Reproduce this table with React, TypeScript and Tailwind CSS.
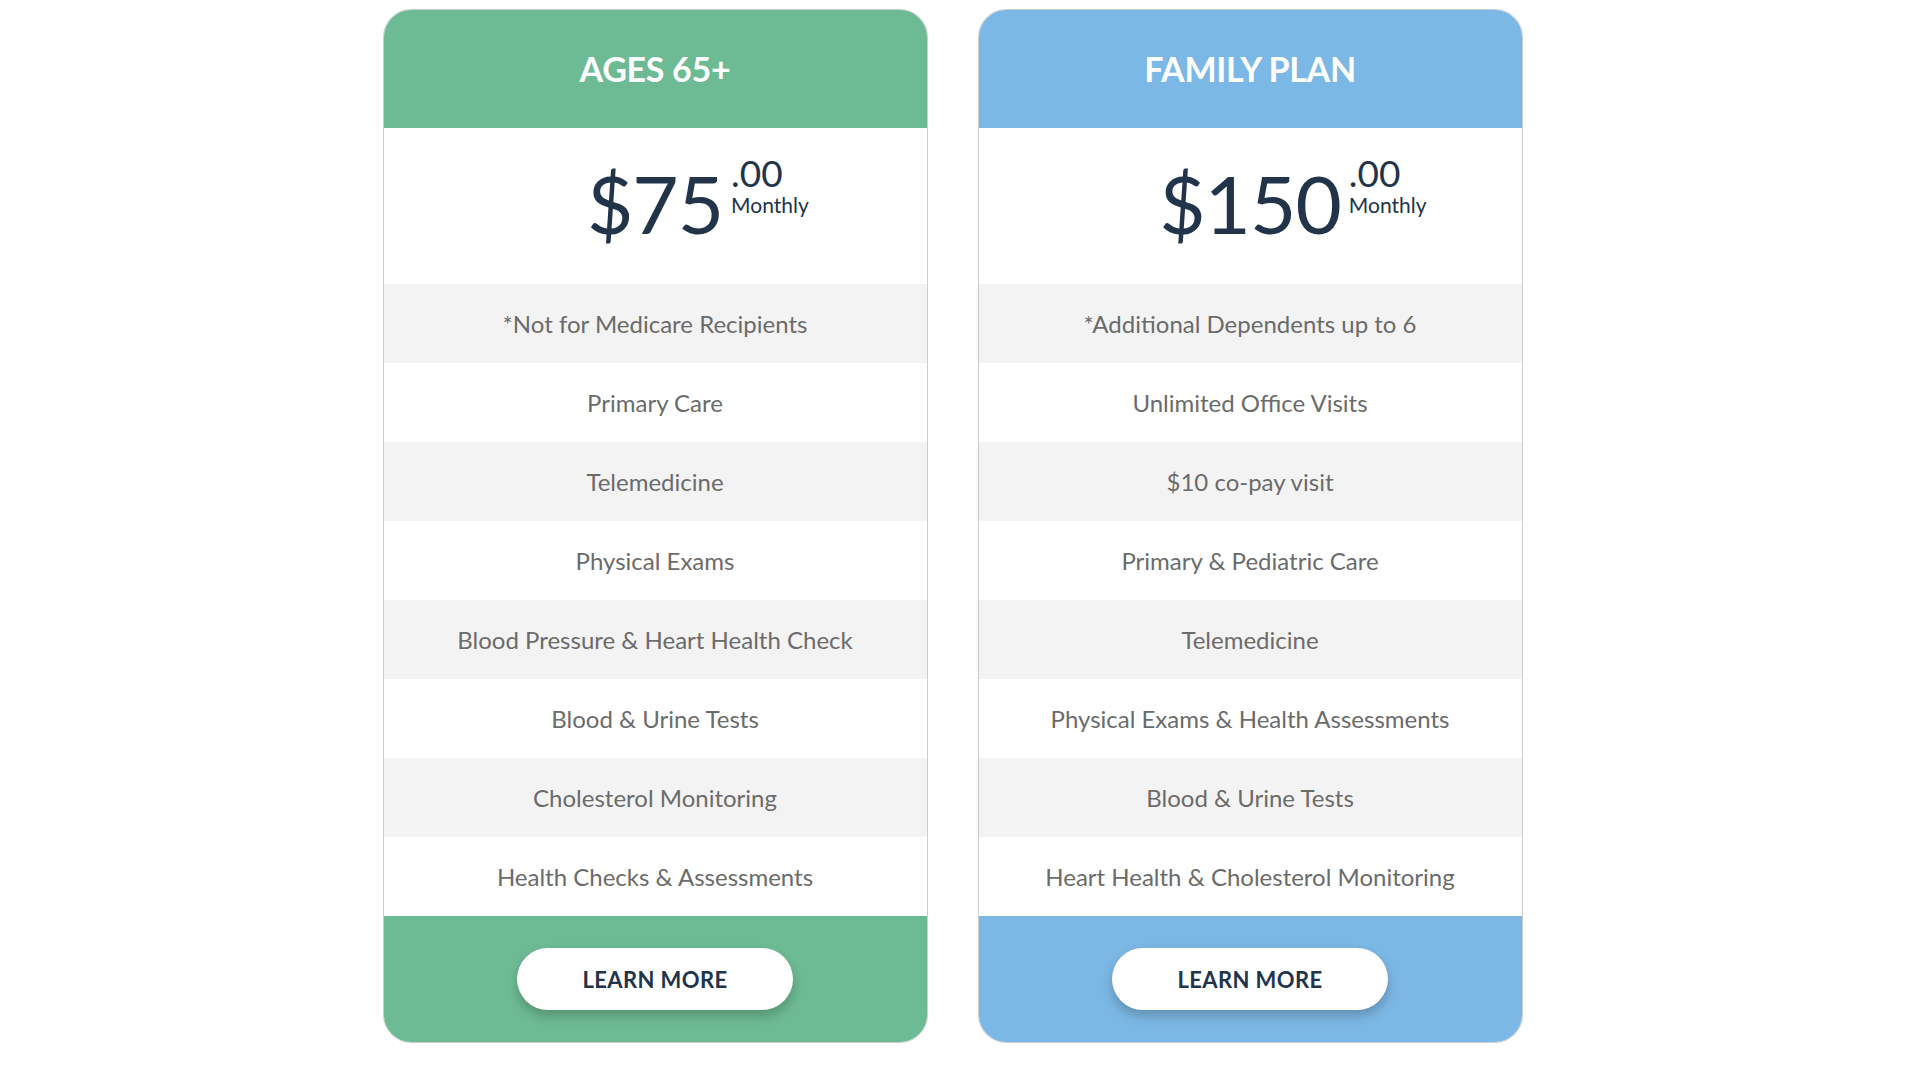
import React from 'react';

type Plan = {
  title: string;
  price: string;
  color: string;
  features: string[];
};

const plans: Plan[] = [
  {
    title: 'AGES 65+',
    price: '$75',
    color: 'bg-[#6dbb94]',
    features: [
      '*Not for Medicare Recipients',
      'Primary Care',
      'Telemedicine',
      'Physical Exams',
      'Blood Pressure & Heart Health Check',
      'Blood & Urine Tests',
      'Cholesterol Monitoring',
      'Health Checks & Assessments',
    ],
  },
  {
    title: 'FAMILY PLAN',
    price: '$150',
    color: 'bg-[#7cb8e5]',
    features: [
      '*Additional Dependents up to 6',
      'Unlimited Office Visits',
      '$10 co-pay visit',
      'Primary & Pediatric Care',
      'Telemedicine',
      'Physical Exams & Health Assessments',
      'Blood & Urine Tests',
      'Heart Health & Cholesterol Monitoring',
    ],
  },
];

const PlanCard = ({ plan }: { plan: Plan }) => {
  return (
    <div className="w-[545px] rounded-[28px] border-[1.5px] border-[#cdcdcd] overflow-hidden bg-white flex flex-col">
      {/* header */}
      <div className={`${plan.color} h-[118px] flex items-center justify-center`}>
        <h2 className="text-white text-[34px] font-bold leading-none tracking-[-0.3px]">{plan.title}</h2>
      </div>

      {/* price */}
      <div className="h-[156px] flex items-center justify-center pb-[6px]">
        <div className="relative text-[#21344a]">
          <span className="text-[80px] leading-none tracking-[-1px]">{plan.price}</span>
          <div className="absolute left-full top-[-9px] ml-[8px] flex flex-col leading-none">
            <span className="text-[37px] leading-none">.00</span>
            <span className="text-[21px] leading-none mt-[3px]">Monthly</span>
          </div>
        </div>
      </div>

      {/* features */}
      <div className="flex flex-col">
        {plan.features.map((f, i) => (
          <div
            key={f}
            className={`h-[79px] flex items-center justify-center text-[24px] text-[#6b6b6b] ${
              i % 2 === 0 ? 'bg-[#f3f3f3]' : 'bg-white'
            }`}
          >
            {f}
          </div>
        ))}
      </div>

      {/* footer */}
      <div className={`${plan.color} h-[126px] flex items-center justify-center`}>
        <button className="w-[276px] h-[62px] rounded-full bg-white text-[#21344a] text-[22px] font-bold tracking-[0.4px] shadow-[0_6px_12px_rgba(0,0,0,0.22)]">
          LEARN MORE
        </button>
      </div>
    </div>
  );
};

export default function App() {
  return (
    <div className="min-h-screen bg-white font-['Lato',sans-serif]">
      <div className="flex justify-center gap-[50px] pt-[9px] pr-[15px]">
        {plans.map((p) => (
          <PlanCard key={p.title} plan={p} />
        ))}
      </div>
    </div>
  );
}
